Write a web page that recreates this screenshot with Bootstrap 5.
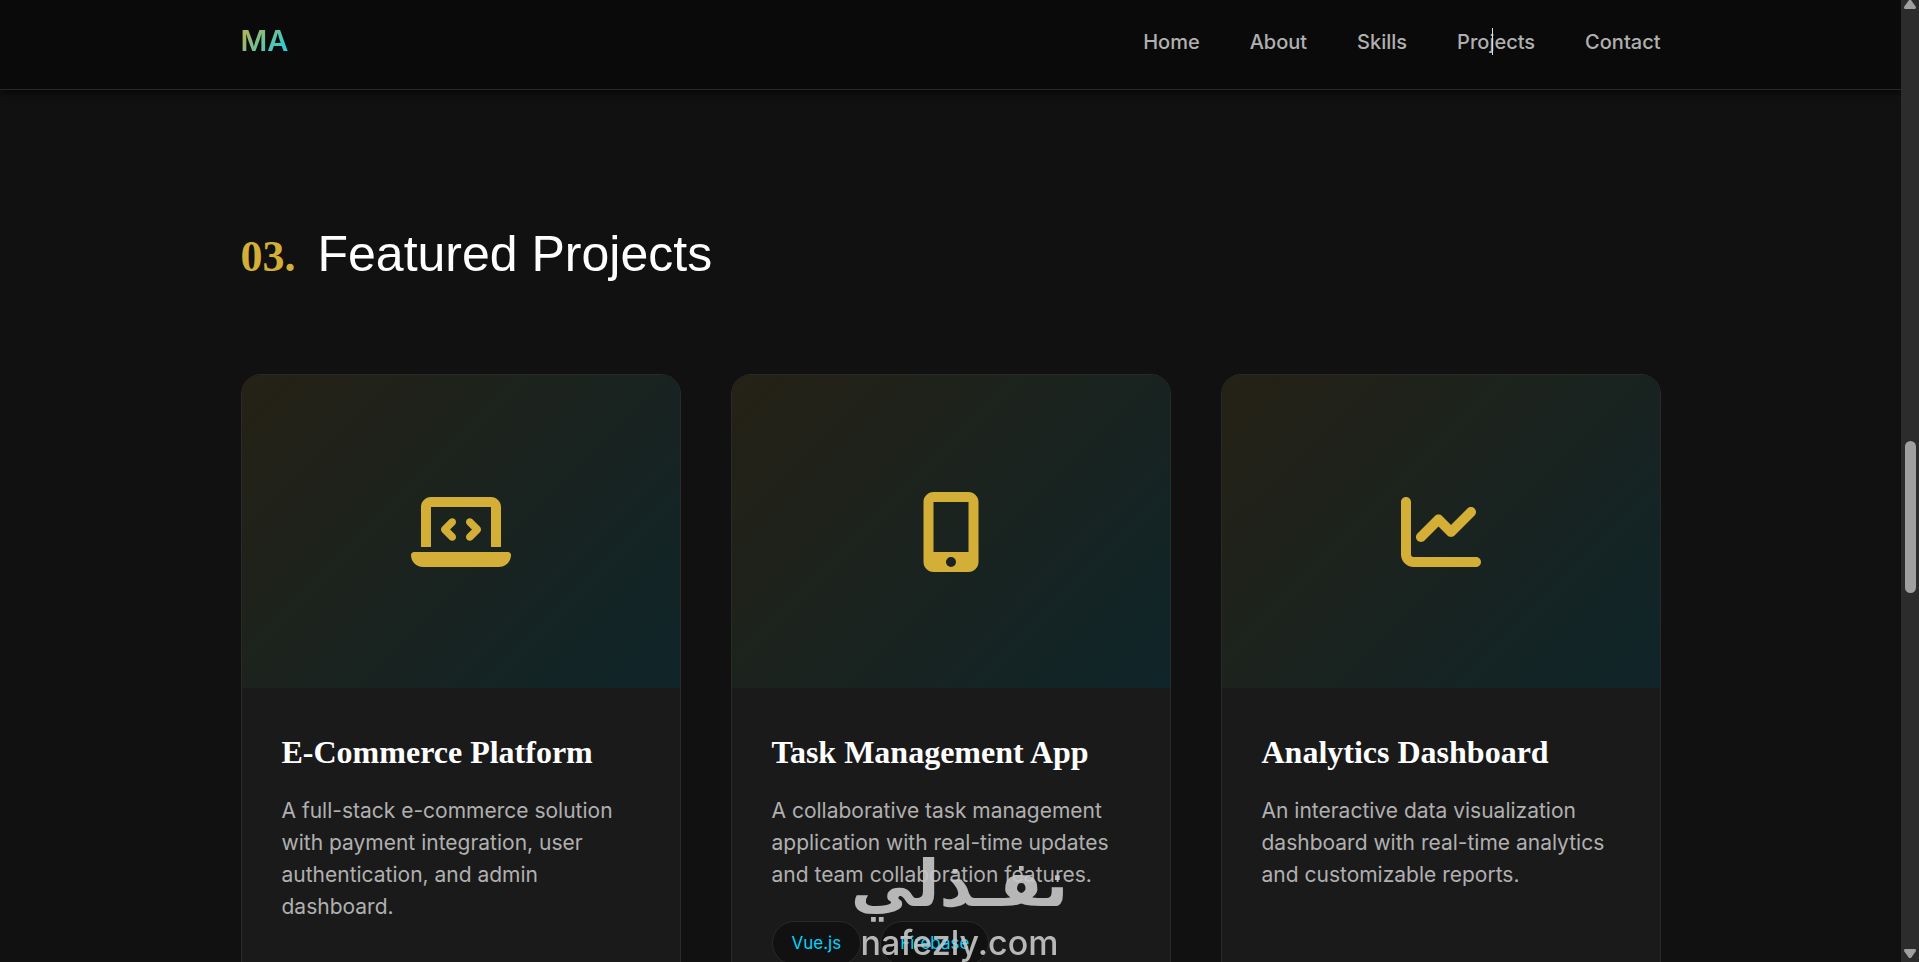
<!DOCTYPE html>
<html lang="en">
<head>
<meta charset="utf-8">
<meta name="viewport" content="width=device-width, initial-scale=1">
<title>MA | Featured Projects</title>
<link href="https://cdn.jsdelivr.net/npm/bootstrap@5.3.0/dist/css/bootstrap.min.css" rel="stylesheet">
<style>
  :root { --gold: #d4af37; --cyan: #00d4ff; --line: #2a2a2a; --muted: #b0b0b0; }
  body { background: #111; color: var(--muted); font-family: Inter, "Open Sans", sans-serif; }
  .site-wrap { max-width: 1500px; padding: 0 40px; }
  .site-header { background: #0a0a0a; border-bottom: 1px solid var(--line); padding: 20px 0 25px; box-shadow: 0 4px 6px rgba(0,0,0,.5); }
  .brand-mark { font-size: 29px; line-height: 42px; font-weight: 600; padding: 0; margin: 0; background: linear-gradient(135deg, var(--gold), var(--cyan)); -webkit-background-clip: text; background-clip: text; color: transparent; }
  .brand-mark:hover { color: transparent; }
  .menu-list { gap: 50px; }
  .menu-list a { color: var(--muted); font-size: 20px; line-height: 44px; font-weight: 500; text-decoration: none; }
  .text-caret { width: 1px; height: 27px; top: 8px; left: 35px; background: #ddd; }
  .projects { padding-top: 130px; }
  .section-title { font: 400 50px/68px "Liberation Sans", Arial, sans-serif; color: #fff; gap: 22px; margin-bottom: 83px; }
  .section-no { font: 700 44px/68px "Liberation Serif", serif; color: var(--gold); }
  .project-grid { display: grid; grid-template-columns: repeat(3, 1fr); gap: 50px; }
  .project { background: #1a1a1a; border: 1px solid var(--line); border-radius: 20px; color: inherit; overflow: hidden; min-height: 680px; }
  .project-art { height: 313px; background: linear-gradient(135deg, rgba(212,175,55,.1), rgba(0,212,255,.1)), #111; color: var(--gold); }
  .project-art svg { height: 80px; fill: currentColor; }
  .project-text { padding: 40px; }
  .project-text h3 { font: 700 32px/48px "Liberation Serif", serif; color: #fff; margin-bottom: 19px; white-space: nowrap; }
  .project-text p { font-size: 21px; line-height: 32px; margin-bottom: 30px; }
  .tech-row { gap: 19px; }
  .tech { background: #111; border: 1px solid var(--line); border-radius: 50px; color: var(--cyan); font-size: 17px; line-height: 24px; padding: 9px 19px; }
  .scroll-rail { width: 18px; background: #2c2c2c; color: #a0a0a0; }
  .scroll-rail svg { width: 12px; height: 9px; fill: currentColor; }
  .scroll-thumb { width: 11px; height: 152px; margin-top: 76px; border-radius: 6px; background: #a0a0a0; }
  .watermark { bottom: 0; left: 0; right: 0; color: #c8c8c8; opacity: .9; pointer-events: none; }
  .watermark .wm-ar { font: 700 64px/80px "DejaVu Sans", sans-serif; }
  .watermark .wm-en { font: 500 34px/38px Inter, sans-serif; }
  @media (max-width: 1199px) { .project-grid { grid-template-columns: 1fr; } }
</style>
</head>
<body>
<div class="d-flex vh-100 overflow-hidden position-relative">
  <div class="flex-fill overflow-hidden">
    <header class="site-header position-relative">
      <nav class="site-wrap mx-auto d-flex justify-content-between" aria-label="Main">
        <a class="brand-mark text-decoration-none" href="#home">MA</a>
        <ul class="menu-list list-unstyled d-flex mb-0">
          <li><a href="#home">Home</a></li>
          <li><a href="#about">About</a></li>
          <li><a href="#skills">Skills</a></li>
          <li class="position-relative"><a href="#projects">Projects</a><span class="text-caret position-absolute"></span></li>
          <li><a href="#contact">Contact</a></li>
        </ul>
      </nav>
    </header>
    <main class="projects site-wrap mx-auto" id="projects">
      <h2 class="section-title d-flex align-items-baseline"><span class="section-no">03.</span>Featured Projects</h2>
      <div class="project-grid">
        <article class="card project">
          <div class="project-art d-flex align-items-center justify-content-center">
            <svg viewBox="0 0 640 512" aria-hidden="true"><path d="M64 96c0-35.300 28.700-64 64-64h384c35.300 0 64 28.700 64 64v256h-64V96H128v256H64V96zM0 403.200C0 392.600 8.600 384 19.200 384h601.600c10.600 0 19.200 8.600 19.200 19.200 0 42.400-34.400 76.800-76.800 76.800H76.800C34.400 480 0 445.600 0 403.200zM281 209l-31 31 31 31c9.400 9.400 9.400 24.600 0 33.900s-24.600 9.400-33.900 0l-48-48c-9.400-9.400-9.400-24.600 0-33.900l48-48c9.400-9.400 24.600-9.400 33.900 0s9.400 24.600 0 33.900zM393 175l48 48c9.400 9.400 9.400 24.600 0 33.900l-48 48c-9.400 9.400-24.600 9.400-33.900 0s-9.400-24.600 0-33.900l31-31-31-31c-9.400-9.400-9.400-24.600 0-33.900s24.600-9.400 33.900 0z"/></svg>
          </div>
          <div class="project-text">
            <h3>E-Commerce Platform</h3>
            <p>A full-stack e-commerce solution with payment integration, user authentication, and admin dashboard.</p>
          </div>
        </article>
        <article class="card project">
          <div class="project-art d-flex align-items-center justify-content-center">
            <svg viewBox="0 0 384 512" aria-hidden="true"><path fill-rule="evenodd" d="M16 64C16 28.700 44.700 0 80 0h224c35.300 0 64 28.700 64 64v384c0 35.300-28.700 64-64 64H80c-35.300 0-64-28.700-64-64V64zm208 384a32 32 0 1 0-64 0 32 32 0 1 0 64 0zM304 64H80v320h224V64z"/></svg>
          </div>
          <div class="project-text">
            <h3>Task Management App</h3>
            <p>A collaborative task management application with real-time updates and team collaboration features.</p>
            <div class="tech-row d-flex"><span class="tech">Vue.js</span><span class="tech">Firebase</span></div>
          </div>
        </article>
        <article class="card project">
          <div class="project-art d-flex align-items-center justify-content-center">
            <svg viewBox="0 0 512 512" aria-hidden="true"><path d="M64 64c0-17.700-14.300-32-32-32S0 46.300 0 64v336c0 44.200 35.800 80 80 80h400c17.700 0 32-14.300 32-32s-14.300-32-32-32H80c-8.800 0-16-7.200-16-16V64zm406.600 86.600c12.500-12.500 12.500-32.800 0-45.300s-32.800-12.500-45.300 0L320 210.700l-57.400-57.400c-12.500-12.500-32.800-12.500-45.300 0l-112 112c-12.500 12.500-12.500 32.800 0 45.300s32.800 12.500 45.300 0L240 221.300l57.400 57.400c12.500 12.500 32.800 12.500 45.300 0l128-128z"/></svg>
          </div>
          <div class="project-text">
            <h3>Analytics Dashboard</h3>
            <p>An interactive data visualization dashboard with real-time analytics and customizable reports.</p>
          </div>
        </article>
      </div>
    </main>
  </div>
  <div class="scroll-rail d-flex flex-column align-items-center justify-content-between flex-shrink-0 pb-1" aria-hidden="true">
    <svg viewBox="0 0 12 9"><path d="M5 0h2l5 7q0 2-1 2H1Q0 9 0 7z"/></svg>
    <div class="scroll-thumb"></div>
    <svg viewBox="0 0 12 9"><path d="M1 0h10q1 0 1 2L7 9H5L0 2Q0 0 1 0z"/></svg>
  </div>
  <div class="watermark position-absolute d-flex flex-column align-items-center">
    <span class="wm-ar" lang="ar" dir="rtl">نفـذلي</span>
    <span class="wm-en">nafezly.com</span>
  </div>
</div>
<script src="https://cdn.jsdelivr.net/npm/bootstrap@5.3.0/dist/js/bootstrap.bundle.min.js"></script>
</body>
</html>
